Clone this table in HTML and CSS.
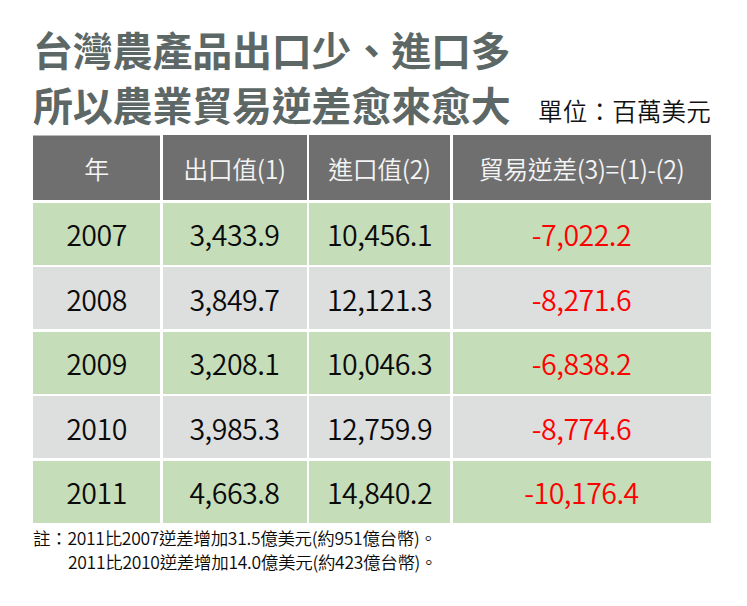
FILE: index.html
```html
<!DOCTYPE html>
<html lang="zh-Hant">
<head>
<meta charset="utf-8">
<title>台灣農產品貿易逆差</title>
<link rel="stylesheet" href="styles.css">
</head>
<body>
<div class="page">
  <header class="head">
    <h1 class="title">台灣農產品出口少、進口多</h1>
    <div class="title-row">
      <h1 class="title">所以農業貿易逆差愈來愈大</h1>
      <span class="unit">單位：百萬美元</span>
    </div>
  </header>
  <div class="grid">
    <div class="th">年</div>
    <div class="th">出口值(1)</div>
    <div class="th">進口值(2)</div>
    <div class="th">貿易逆差(3)=(1)-(2)</div>

    <div class="td g">2007</div>
    <div class="td g">3,433.9</div>
    <div class="td g">10,456.1</div>
    <div class="td g neg">-7,022.2</div>

    <div class="td s">2008</div>
    <div class="td s">3,849.7</div>
    <div class="td s">12,121.3</div>
    <div class="td s neg">-8,271.6</div>

    <div class="td g">2009</div>
    <div class="td g">3,208.1</div>
    <div class="td g">10,046.3</div>
    <div class="td g neg">-6,838.2</div>

    <div class="td s">2010</div>
    <div class="td s">3,985.3</div>
    <div class="td s">12,759.9</div>
    <div class="td s neg">-8,774.6</div>

    <div class="td g">2011</div>
    <div class="td g">4,663.8</div>
    <div class="td g">14,840.2</div>
    <div class="td g neg">-10,176.4</div>
  </div>
  <div class="notes">
    <p class="note">註：2011比2007逆差增加31.5億美元(約951億台幣)。</p>
    <p class="note indent">2011比2010逆差增加14.0億美元(約423億台幣)。</p>
  </div>
</div>
</body>
</html>
```
FILE: styles.css
```css
html, body {
  margin: 0;
  padding: 0;
  background: #ffffff;
}
.page {
  width: 747px;
  height: 606px;
  padding: 0 0 0 33px;
  box-sizing: border-box;
  font-family: "Noto Sans CJK TC", "Noto Sans", sans-serif;
}
.head {
  width: 677px;
  height: 135px;
  padding-top: 22px;
  box-sizing: border-box;
}
.title {
  margin: 0;
  font-size: 40px;
  line-height: 55px;
  font-weight: 700;
  color: #5d6866;
  letter-spacing: -0.2px;
}
.title-row {
  display: flex;
  justify-content: space-between;
  align-items: baseline;
}
.unit {
  font-size: 24.5px;
  font-weight: 350;
  color: #111;
  letter-spacing: 0.2px;
  margin-right: -1px;
}
.grid {
  display: grid;
  width: 677.5px;
  grid-template-columns: 127px 144px 141px 258px;
  grid-template-rows: 65px repeat(5, 62px);
  gap: 2.5px;
}
.th {
  background: #6f6f6f;
  color: #f4f4f4;
  font-size: 25px;
  font-weight: 350;
  display: flex;
  align-items: center;
  justify-content: center;
  letter-spacing: -0.5px;
}
.grid .th:first-child { box-shadow: inset 0 1px 0 #b8b8b8; }
.td {
  display: flex;
  align-items: center;
  justify-content: center;
  font-size: 28.5px;
  font-weight: 350;
  color: #0a0a0a;
  letter-spacing: -0.5px;
}
.g { background: #c6ddba; }
.s { background: #dddede; }
.neg { color: #ff0000; }
.notes {
  padding-top: 3px;
}
.note {
  margin: 0;
  font-size: 17.5px;
  line-height: 24px;
  font-weight: 350;
  color: #0a0a0a;
  letter-spacing: -0.3px;
}
.indent {
  padding-left: 35px;
}
```
